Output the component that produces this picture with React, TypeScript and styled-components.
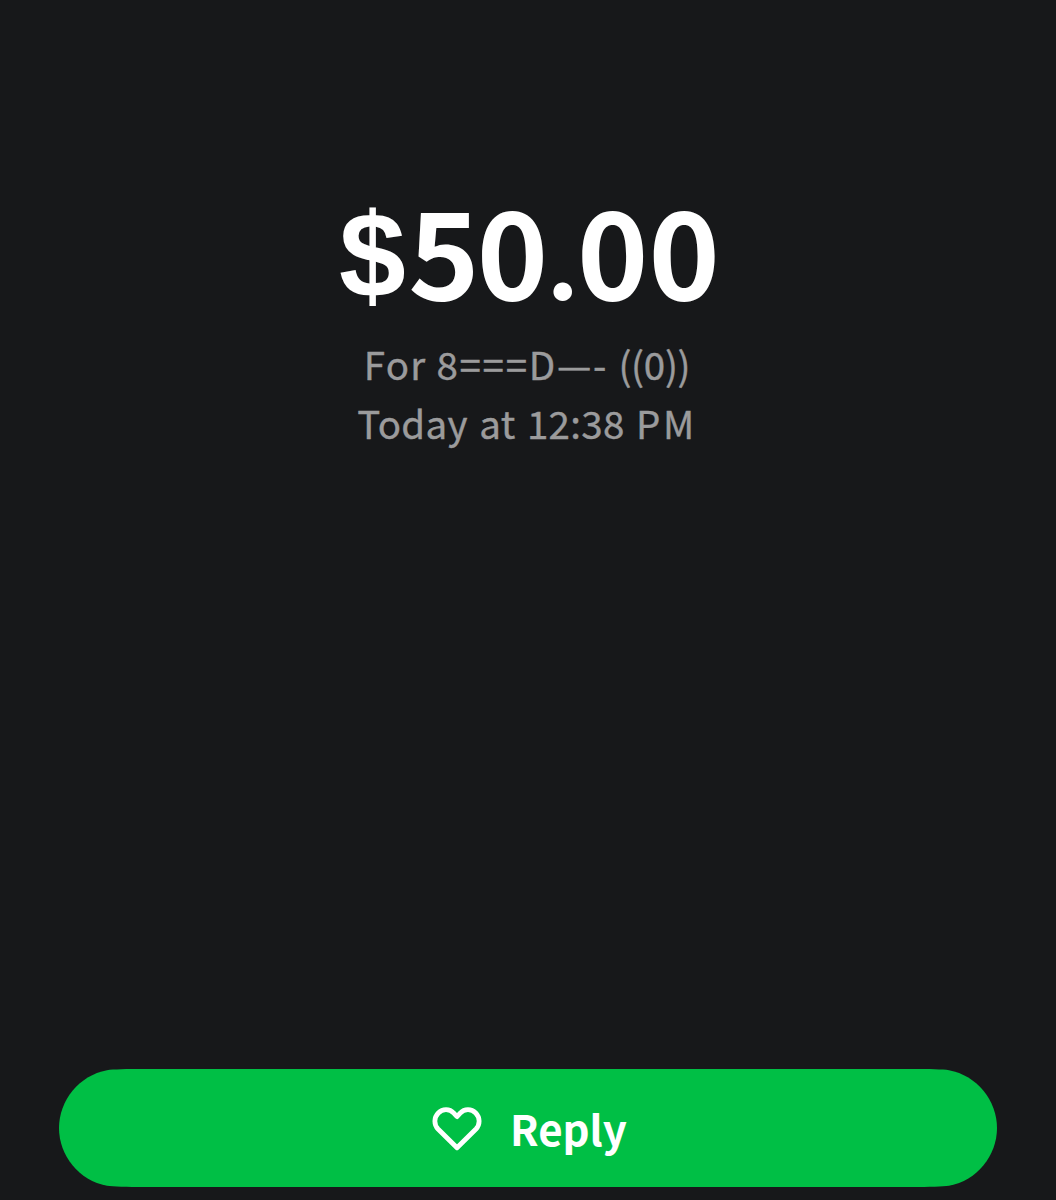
import React from "react";
import styled, { createGlobalStyle } from "styled-components";

const Global = createGlobalStyle`
  body { margin: 0; background: #17181a; }
`;

const Screen = styled.main`
  box-sizing: border-box;
  height: 1200px;
  padding: 181px 59px 13px;
  display: flex;
  flex-direction: column;
  background: #17181a;
  font-family: "Noto Sans CJK SC", sans-serif;
`;

const Summary = styled.section`
  display: flex;
  flex-direction: column;
  align-items: center;
  flex: 1;
`;

const Amount = styled.h1`
  margin: 0 0 19px;
  padding-left: 3px;
  height: 134px;
  font: 700 121px/134px "Noto Sans CJK SC", sans-serif;
  color: #fff;
  white-space: nowrap;
`;

const Currency = styled.span`
  margin-right: 2.5px;
  font-family: "Liberation Sans", sans-serif;
  font-size: 120px;
  line-height: 1;
  vertical-align: 3px;
`;

const Tight = styled.span`
  letter-spacing: -3px;
`;

const Point = styled.span`
  font-family: Lato, sans-serif;
  font-size: 122px;
  line-height: 1;
`;

const Detail = styled.p<{ $spacing: number; $words?: number }>`
  margin: 0;
  padding-right: 2px;
  font: 400 38.5px/59px "Noto Sans CJK SC", sans-serif;
  letter-spacing: ${(p) => p.$spacing}px;
  word-spacing: ${(p) => p.$words ?? 0}px;
  color: #9b9b9c;
  -webkit-text-stroke: 0.4px #9b9b9c;
  white-space: nowrap;
`;

const Run = styled.span<{ $spacing: number }>`
  letter-spacing: ${(p) => p.$spacing}px;
`;

const ReplyButton = styled.button`
  height: 118px;
  border: 0;
  clip-path: path("M0 59C0 31.5 20 6.4 48 1.2C54 .2 68 0 85 0H853C870 0 884 .2 890 1.2C918 6.4 938 31.5 938 59C938 86.5 918 111.6 890 116.8C884 117.8 870 118 853 118H85C68 118 54 117.8 48 116.8C20 111.6 0 86.5 0 59Z");
  padding: 0 0 0 3px;
  display: flex;
  align-items: center;
  justify-content: center;
  gap: 28px;
  background: #00bf45;
  color: #fff;
  font: 700 42px/59px "Noto Sans CJK SC", sans-serif;
`;

const Heart = styled.svg`
  width: 50px;
  height: 44px;
  margin-top: 2px;
  fill: none;
  stroke: #fff;
  stroke-width: 4.8;
  stroke-linejoin: round;
`;

const Label = styled.span`
  margin-bottom: 2px;
`;

export default function App() {
  return (
    <Screen>
      <Global />
      <Summary>
        <Amount>
          <Currency>$</Currency><Tight>5</Tight>0<Point>.</Point>00
        </Amount>
        <Detail $spacing={1.3}>
          For <Run $spacing={1.7}>8===D—- </Run>
          <Run $spacing={-0.3}>((0))</Run>
        </Detail>
        <Detail $spacing={0.3} $words={2.5}>
          Today at 12:38 <Run $spacing={2.6}>PM</Run>
        </Detail>
      </Summary>
      <ReplyButton>
        <Heart viewBox="0 0 50 44">
          <path d="M25 9.6L21.8 6.2C17.6 1.6 10.6 1.6 6.3 6C1.8 10.6 1.8 17.6 6 22L25 40.8L44 22C48.2 17.6 48.2 10.6 43.7 6C39.4 1.6 32.4 1.6 28.2 6.2Z" />
        </Heart>
        <Label>Reply</Label>
      </ReplyButton>
    </Screen>
  );
}
